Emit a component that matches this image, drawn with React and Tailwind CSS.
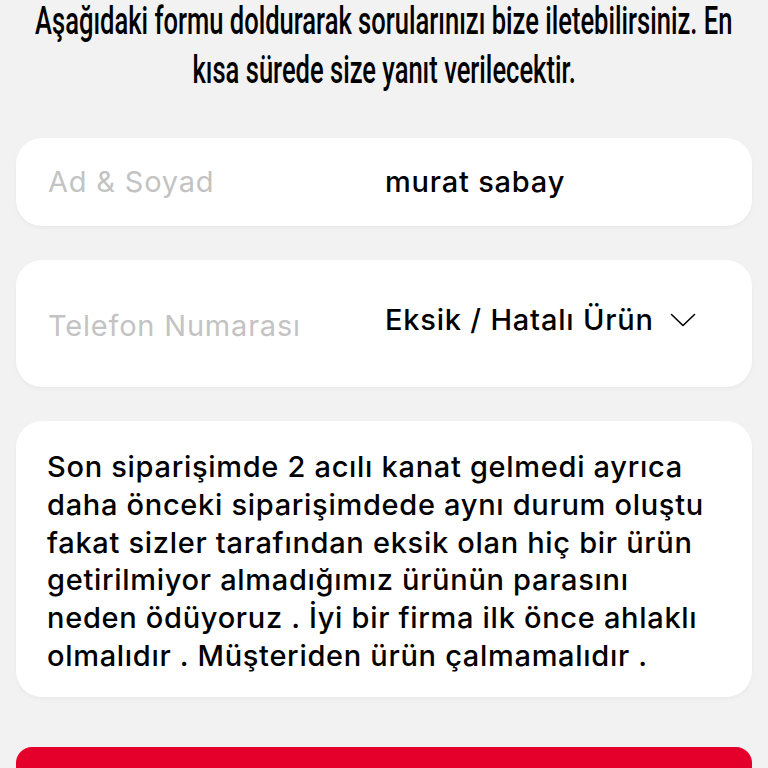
import { useLayoutEffect, useRef, useState } from "react";

const messageLines = [
  "Son siparişimde 2 acılı kanat gelmedi ayrıca",
  "daha önceki siparişimdede aynı durum oluştu",
  "fakat sizler tarafından eksik olan hiç bir ürün",
  "getirilmiyor almadığımız ürünün parasını",
  "neden ödüyoruz . İyi bir firma ilk önce ahlaklı",
  "olmalıdır . Müşteriden ürün çalmamalıdır .",
];

function Chevron() {
  return (
    <svg width="26" height="14" viewBox="0 0 26 14" fill="none" className="text-black">
      <polyline points="1.5,1.5 13,12.5 24.5,1.5" stroke="currentColor" strokeWidth="1.6" strokeLinecap="round" strokeLinejoin="round" />
    </svg>
  );
}

function FieldRow({ label, value, icon, tall }) {
  return (
    <div
      className={`flex items-center rounded-[26px] bg-white pl-8 pr-14 shadow-[0_2px_4px_rgba(0,0,0,0.04)] ${
        tall ? "h-[127px]" : "h-[88px]"
      }`}
    >
      <div className={`w-[337px] text-[29px] tracking-[0.8px] text-[#c3c3c3] ${tall ? "pt-1" : ""}`}>{label}</div>
      <div className={`flex flex-1 items-center justify-between text-[29px] font-medium tracking-[0.8px] text-black ${tall ? "-mt-2" : ""}`}>
        <span>{value}</span>
        {icon}
      </div>
    </div>
  );
}

// condensed heading: squeeze the first line to 697px wide
function Heading() {
  const ref = useRef(null);
  const [scale, setScale] = useState(0.7);

  useLayoutEffect(() => {
    if (ref.current) setScale(697 / ref.current.offsetWidth);
  }, []);

  return (
    <div className="-mt-[3px] flex flex-col items-center font-['Roboto',sans-serif] text-[38px] font-medium leading-[49px] text-black">
      <div ref={ref} className="whitespace-nowrap" style={{ transform: `scaleX(${scale})` }}>
        Aşağıdaki formu doldurarak sorularınızı bize iletebilirsiniz. En
      </div>
      <div className="whitespace-nowrap" style={{ transform: `scaleX(${scale})` }}>
        kısa sürede size yanıt verilecektir.
      </div>
    </div>
  );
}

export default function App() {
  const [topic] = useState("Eksik / Hatalı Ürün");

  return (
    <div className="min-h-screen overflow-hidden bg-[#f2f2f2] px-4 font-['Inter','Noto_Sans',sans-serif]">
      <Heading />

      <div className="mt-[43px] flex flex-col gap-[34px]">
        <FieldRow label="Ad & Soyad" value="murat sabay" />
        <FieldRow label="Telefon Numarası" value={topic} icon={<Chevron />} tall />
        <div className="rounded-[26px] bg-white pb-[22px] pl-[31px] pr-6 pt-[27px] text-[29px] font-medium leading-[37.8px] tracking-[0.7px] text-black shadow-[0_2px_4px_rgba(0,0,0,0.04)]">
          {messageLines.map((line) => (
            <div key={line} className="whitespace-nowrap">
              {line}
            </div>
          ))}
        </div>
      </div>

      <button className="mt-[50px] h-[80px] w-full rounded-[16px] bg-[#e4002b]" />
    </div>
  );
}
